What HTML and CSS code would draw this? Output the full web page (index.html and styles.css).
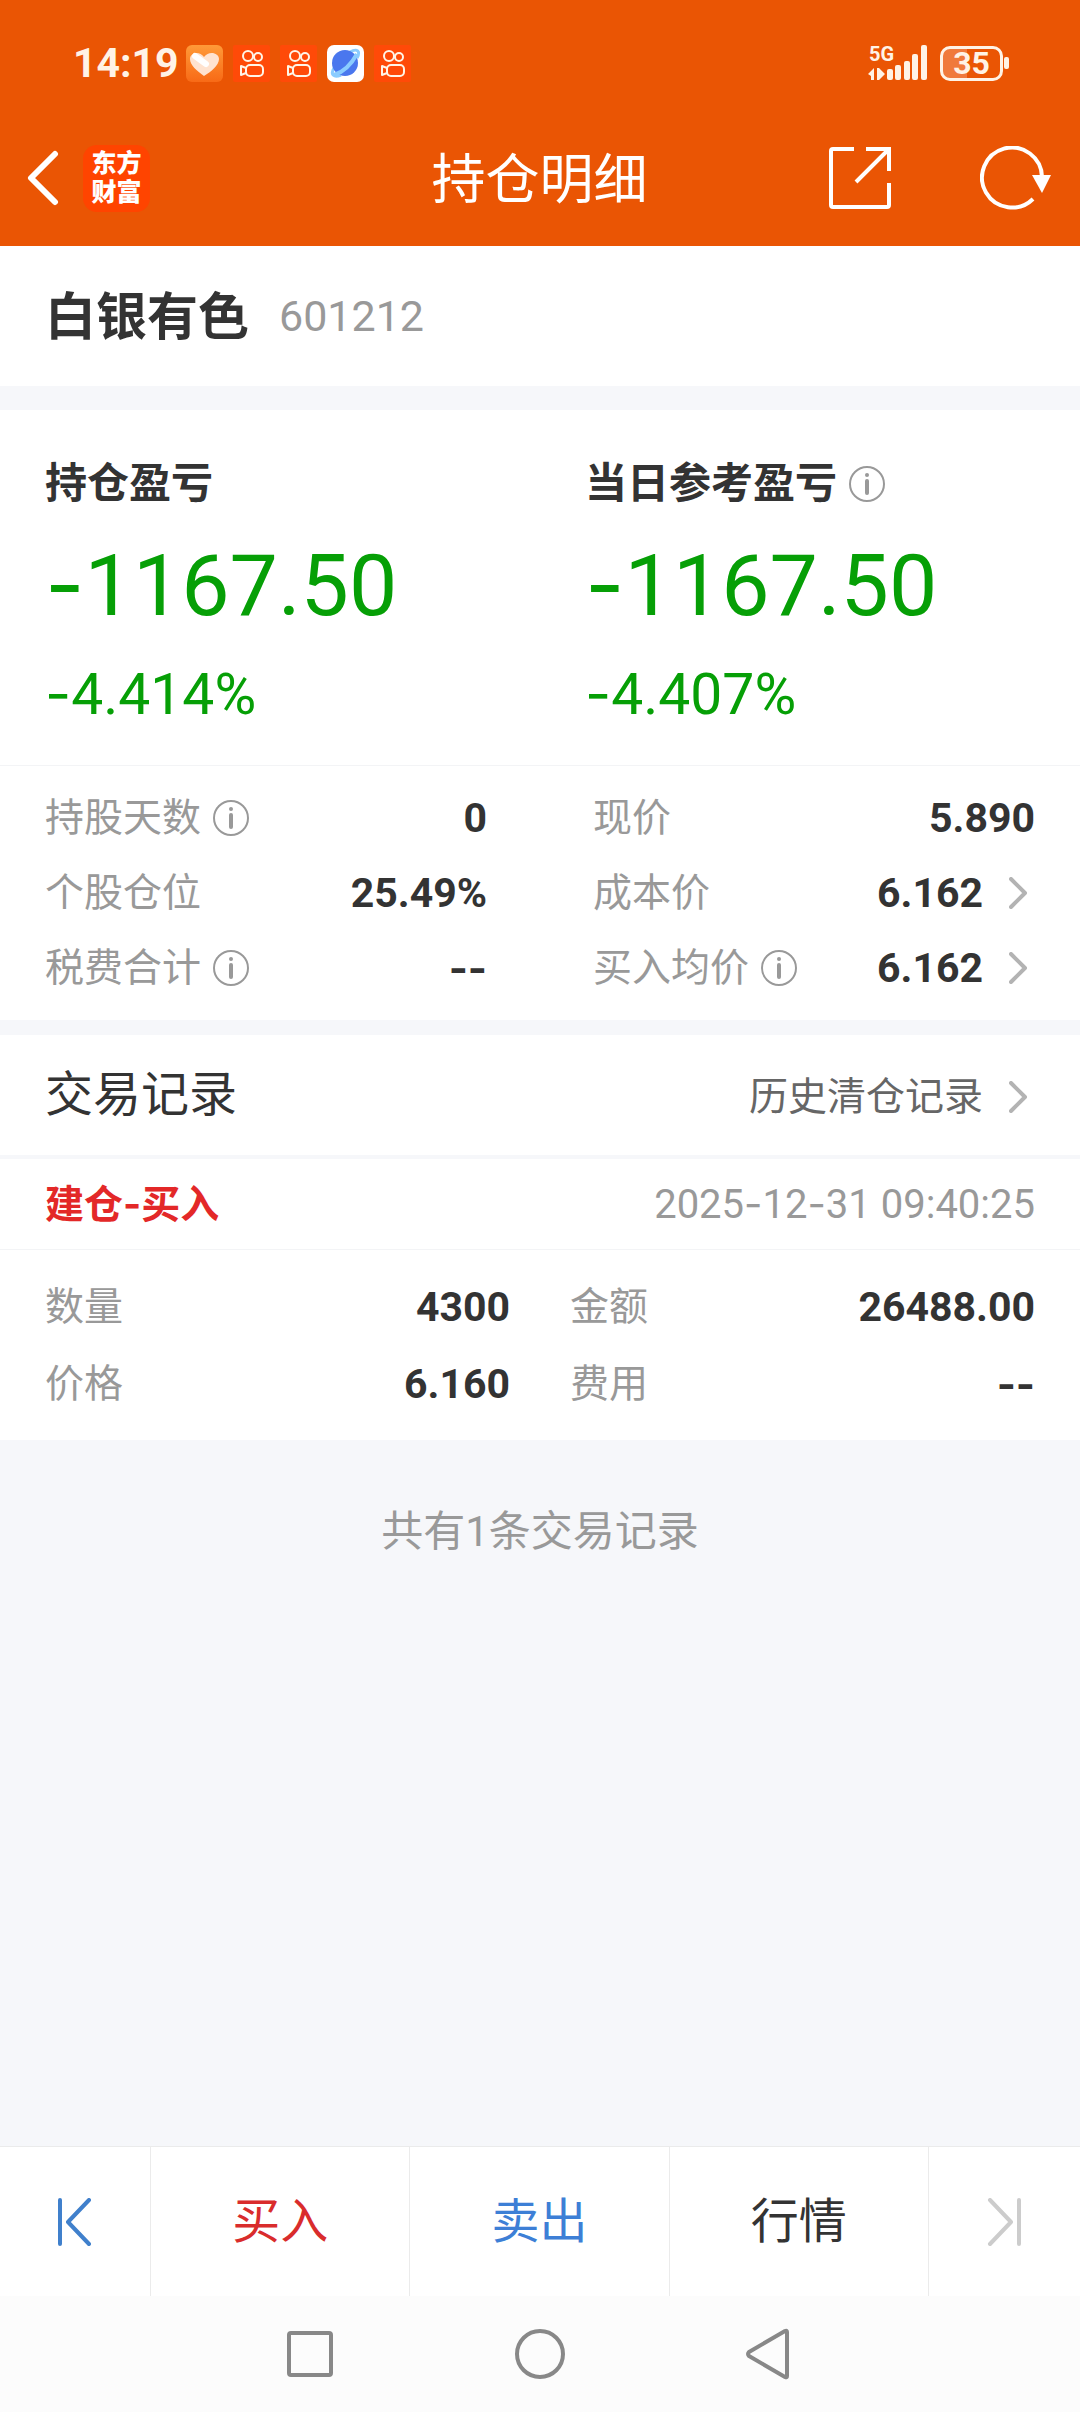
FILE: index.html
```html
<!DOCTYPE html>
<html lang="zh-CN">

<head>
    <meta charset="utf-8">
    <meta name="viewport" content="width=device-width, initial-scale=1">
    <title>持仓明细</title>
    <link rel="stylesheet" href="styles.css">
</head>

<body>
    <!-- shared icons -->
    <svg class="sprite" aria-hidden="true">
        <symbol id="info" viewBox="0 0 36 36">
            <circle cx="18" cy="18" r="17" fill="none" stroke="#999" stroke-width="2"/>
            <circle cx="18" cy="9" r="2" fill="#999"/>
            <path d="M18 15v12" stroke="#999" stroke-width="4" stroke-linecap="round"/>
        </symbol>
        <symbol id="chevron" viewBox="0 0 19 32">
            <path d="M2 2l14 14L2 30" fill="none" stroke="#b3b3b3" stroke-width="4" stroke-linecap="round" stroke-linejoin="round"/>
        </symbol>
        <symbol id="kwai" viewBox="0 0 37 37">
            <rect width="37" height="37" rx="2" fill="#ff4a08"/>
            <g fill="none" stroke="#fff5e8" stroke-width="2" stroke-linejoin="round">
                <circle cx="15" cy="11" r="5"/>
                <circle cx="25" cy="12" r="4"/>
                <rect x="13" y="20" width="17" height="11" rx="4"/>
                <path d="M13 23l-5-2v9l5-2"/>
            </g>
        </symbol>
    </svg>

    <header class="header">
        <div class="status">
            <span class="time">14:19</span>
            <div class="notices">
                <svg width="37" height="37" viewBox="0 0 37 37">
                    <defs>
                        <linearGradient id="orange" x2="0" y2="1"><stop stop-color="#ff9a38"/><stop offset="1" stop-color="#f86a16"/></linearGradient>
                    </defs>
                    <rect width="37" height="37" rx="6" fill="url(#orange)"/>
                    <path d="M18 31C11 26 4 20 4 14c0-6 9-9 14-2 5-7 15-4 15 2 0 6-8 13-15 17z" fill="#ffe3cf"/>
                    <path d="M9 11l11 8" stroke="#fff" stroke-width="6" stroke-linecap="round"/>
                </svg>
                <svg width="37" height="37"><use href="#kwai"/></svg>
                <svg width="37" height="37"><use href="#kwai"/></svg>
                <svg width="37" height="37" viewBox="0 0 37 37">
                    <rect width="37" height="37" rx="7" fill="#fff"/>
                    <path d="M23 7c7-4 11-1 7 6M7 23c-4 7 0 10 7 7" fill="none" stroke="#8accff" stroke-width="3"/>
                    <circle cx="18" cy="18" r="13" fill="#4a77ee"/>
                    <path d="M30 9C25 18 17 27 7 30" fill="none" stroke="#8accff" stroke-width="4"/>
                </svg>
                <svg width="37" height="37"><use href="#kwai"/></svg>
            </div>
            <div class="signal">
                <span class="network">5G</span>
                <svg width="60" height="36" viewBox="0 0 60 36" fill="#fff3e6">
                    <path d="M0 29l6-6v12H3v-4zM17 29l-6 6h-2V23h2z"/>
                    <rect x="19" y="24" width="6" height="11" rx="2"/>
                    <rect x="27" y="20" width="6" height="15" rx="2"/>
                    <rect x="36" y="16" width="6" height="19" rx="2"/>
                    <rect x="44" y="9" width="6" height="26" rx="2"/>
                    <rect x="53" y="0" width="6" height="35" rx="2"/>
                </svg>
            </div>
            <div class="battery">35</div>
        </div>

        <div class="titlebar">
            <div class="title-left">
                <button class="icon-button" aria-label="返回">
                    <svg width="32" height="56" viewBox="0 0 32 56"><path d="M28 4L4 28l24 24" fill="none" stroke="#fff" stroke-width="6" stroke-linecap="round" stroke-linejoin="round"/></svg>
                </button>
                <div class="logo">东方<br>财富</div>
            </div>
            <h1 class="title">持仓明细</h1>
            <div class="title-right">
                <button class="icon-button" aria-label="分享">
                    <svg width="64" height="64" viewBox="0 0 64 64" fill="none" stroke="#fff" stroke-width="4">
                        <path d="M26 3H5q-2 0-2 2v54q0 2 2 2h54q2 0 2-2V37M38 3h23v22M61 3L28 36"/>
                    </svg>
                </button>
                <button class="icon-button" aria-label="刷新">
                    <svg width="72" height="64" viewBox="0 0 72 64">
                        <path d="M53 53A30 30 0 1 1 62 31" fill="none" stroke="#fff" stroke-width="4"/>
                        <path d="M52 29h19l-9 18z" fill="#fff"/>
                    </svg>
                </button>
            </div>
        </div>
    </header>

    <main>
        <section class="stock">
            <h2 class="stock-name">白银有色</h2>
            <span class="stock-code">601212</span>
        </section>

        <!-- profit and loss -->
        <section class="profit">
            <div>
                <h3 class="profit-label">持仓盈亏</h3>
                <div class="profit-amount"><span class="dash">-</span>1167.50</div>
                <div class="profit-rate"><span class="dash">-</span>4.414%</div>
            </div>
            <div>
                <h3 class="profit-label">当日参考盈亏<svg class="info"><use href="#info"/></svg></h3>
                <div class="profit-amount"><span class="dash">-</span>1167.50</div>
                <div class="profit-rate"><span class="dash">-</span>4.407%</div>
            </div>
        </section>

        <dl class="stats">
            <div class="item"><dt>持股天数<svg class="info"><use href="#info"/></svg></dt><dd>0</dd></div>
            <div class="item"><dt>现价</dt><dd>5.890</dd></div>
            <div class="item"><dt>个股仓位</dt><dd>25.49%</dd></div>
            <div class="item"><dt>成本价</dt><dd>6.162<svg class="chevron"><use href="#chevron"/></svg></dd></div>
            <div class="item"><dt>税费合计<svg class="info"><use href="#info"/></svg></dt><dd><span class="dash">--</span></dd></div>
            <div class="item"><dt>买入均价<svg class="info"><use href="#info"/></svg></dt><dd>6.162<svg class="chevron"><use href="#chevron"/></svg></dd></div>
        </dl>

        <!-- trade records -->
        <section class="records-head">
            <h2 class="records-title">交易记录</h2>
            <a class="history" href="#">历史清仓记录<svg class="chevron"><use href="#chevron"/></svg></a>
        </section>

        <article class="record">
            <div class="record-head">
                <h3 class="record-type">建仓<span class="dash">-</span>买入</h3>
                <time class="record-time">2025<span class="dash">-</span>12<span class="dash">-</span>31 09:40:25</time>
            </div>
            <dl class="record-body">
                <div class="item"><dt>数量</dt><dd>4300</dd></div>
                <div class="item"><dt>金额</dt><dd>26488.00</dd></div>
                <div class="item"><dt>价格</dt><dd>6.160</dd></div>
                <div class="item"><dt>费用</dt><dd><span class="dash">--</span></dd></div>
            </dl>
        </article>

        <p class="total">共有1条交易记录</p>
    </main>

    <footer>
        <div class="actions">
            <button class="action-side" aria-label="上一只">
                <svg width="34" height="48" viewBox="0 0 34 48" fill="none" stroke="#4080cc" stroke-width="4" stroke-linecap="round" stroke-linejoin="round"><path d="M2 2v44M31 2L10 24l21 22"/></svg>
            </button>
            <button class="action buy">买入</button>
            <button class="action sell">卖出</button>
            <button class="action">行情</button>
            <button class="action-side" aria-label="下一只">
                <svg width="34" height="48" viewBox="0 0 34 48" fill="none" stroke="#ccc" stroke-width="4" stroke-linecap="round" stroke-linejoin="round"><path d="M32 2v44M3 2l21 22L3 46"/></svg>
            </button>
        </div>
        <div class="system">
            <button aria-label="最近任务"><svg width="52" height="52" viewBox="0 0 52 52" fill="none" stroke="#888" stroke-width="4"><rect x="5" y="5" width="42" height="42" rx="2"/></svg></button>
            <button aria-label="主屏幕"><svg width="52" height="52" viewBox="0 0 52 52" fill="none" stroke="#888" stroke-width="4"><circle cx="26" cy="26" r="23"/></svg></button>
            <button aria-label="后退"><svg width="52" height="52" viewBox="0 0 52 52" fill="none" stroke="#888" stroke-width="4" stroke-linejoin="round"><path d="M43 4v44q0 2-2 1L5 28q-2-2 0-4L41 3q2-1 2 1z"/></svg></button>
        </div>
    </footer>
</body>

</html>
```
FILE: styles.css
```css
* {
    box-sizing: border-box;
}

body {
    display: flex;
    flex-direction: column;
    min-height: 100vh;
    margin: 0;
    background-color: #f6f7fa;
    color: #333;
    font-family: Roboto, "Noto Sans CJK SC", sans-serif;
    font-size: 39px;
    line-height: 60px;
}

h1,
h2,
h3,
p,
dl,
dd {
    margin: 0;
}

button {
    padding: 0;
    border: none;
    background: none;
    color: inherit;
    font: inherit;
    cursor: pointer;
}

svg {
    display: block;
    flex: none;
}

.sprite {
    position: absolute;
    width: 0;
    height: 0;
}

/* the hyphen of Inter is as wide as a minus sign */
.dash {
    font-family: Inter, sans-serif;
}

.info {
    width: 36px;
    height: 36px;
    margin-left: 12px;
}

.chevron {
    width: 19px;
    height: 32px;
    margin: 0 7px 0 26px;
}

/* Header */
.header {
    background-color: #ea5504;
    color: #fff;
}

.status {
    display: flex;
    align-items: center;
    height: 110px;
    padding: 16px 77px 0 73px;
    color: #fff3e6;
}

.time {
    font-size: 41px;
    font-weight: 700;
}

.notices {
    display: flex;
    gap: 10px;
    margin-left: 7px;
    margin-right: auto;
}

.signal {
    position: relative;
}

.network {
    position: absolute;
    top: -1px;
    left: 1px;
    font-size: 20px;
    font-weight: 700;
    line-height: 20px;
}

.battery {
    position: relative;
    width: 63px;
    height: 35px;
    margin-left: 12px;
    border: 3px solid #fff3e6;
    border-radius: 10px;
    background: linear-gradient(to right, #f07a3c 24px, transparent 24px);
    font-size: 32px;
    font-weight: 700;
    line-height: 29px;
    text-align: center;
}

.battery::after {
    content: "";
    position: absolute;
    top: 8px;
    right: -9px;
    width: 5px;
    height: 12px;
    border-radius: 2px;
    background-color: #fff3e6;
}

.titlebar {
    display: grid;
    grid-template-columns: 1fr auto 1fr;
    align-items: center;
    height: 136px;
    padding: 0 28px 0 27px;
}

.title {
    padding-top: 6px;
    font-size: 54px;
    font-weight: 400;
}

.title-left,
.title-right {
    display: flex;
    align-items: center;
}

.title-left {
    gap: 24px;
}

.title-right {
    justify-content: flex-end;
    gap: 88px;
}

.logo {
    width: 67px;
    height: 67px;
    padding-top: 4px;
    border-radius: 14px;
    background-color: #ff4400;
    font-size: 25px;
    font-weight: 900;
    line-height: 29px;
    text-align: center;
}

/* Stock name */
.stock {
    display: flex;
    align-items: center;
    gap: 30px;
    height: 140px;
    padding: 0 45px;
    background-color: #fff;
}

.stock-name {
    padding-top: 4px;
    font-size: 51px;
    font-weight: 700;
}

.stock-code {
    color: #999;
    font-size: 43px;
}

/* Profit and loss */
.profit {
    display: grid;
    grid-template-columns: 1fr 1fr;
    gap: 90px;
    margin-top: 24px;
    padding: 44px 45px 32px;
    border-bottom: 1px solid #f3f4f6;
    background-color: #fff;
}

.profit-label {
    display: flex;
    align-items: center;
    font-size: 42px;
    font-weight: 700;
}

.profit-amount,
.profit-rate {
    color: #069f06;
}

.profit-amount {
    font-size: 86px;
    line-height: 140px;
}

.profit-rate {
    font-size: 57px;
    line-height: 76px;
}

/* Label and value pairs */
.stats,
.record-body {
    display: grid;
    grid-template-columns: 1fr 1fr;
    background-color: #fff;
}

.stats {
    gap: 15px 106px;
    padding: 22px 45px;
}

.item {
    display: flex;
    justify-content: space-between;
}

.item dt,
.item dd {
    display: flex;
    align-items: center;
}

.item dt {
    color: #999;
}

.item dd {
    font-size: 41px;
    font-weight: 700;
}

/* Trade records */
.records-head {
    display: flex;
    justify-content: space-between;
    align-items: center;
    height: 120px;
    margin-top: 15px;
    padding: 0 45px;
    background-color: #fff;
}

.records-title {
    font-size: 48px;
    font-weight: 400;
}

.history {
    display: flex;
    align-items: center;
    padding-top: 4px;
    color: #666;
    text-decoration: none;
}

.record {
    margin-top: 4px;
    background-color: #fff;
}

.record-head {
    display: flex;
    justify-content: space-between;
    align-items: center;
    height: 91px;
    padding: 0 45px;
    border-bottom: 1px solid #f3f4f6;
}

.record-type {
    color: #e32828;
    font-size: 39px;
    font-weight: 700;
}

.record-time {
    color: #999;
    font-size: 40px;
}

.record-body {
    gap: 17px 60px;
    padding: 27px 45px 26px;
}

.total {
    padding: 62px 45px;
    color: #999;
    font-size: 42px;
    text-align: center;
}

/* Bottom bar */
footer {
    margin-top: auto;
}

.actions {
    display: flex;
    height: 150px;
    border-top: 1px solid #ebebeb;
    background-color: #fff;
}

.actions button {
    display: flex;
    justify-content: center;
    align-items: center;
    border-right: 1px solid #ebebeb;
}

.actions button:last-child {
    border-right: none;
}

.action {
    flex: 1;
    font-size: 48px;
}

.action-side {
    width: 14%;
}

.buy {
    color: #d92c2c;
}

.sell {
    color: #3d7fd6;
}

.system {
    display: grid;
    grid-template-columns: repeat(3, 1fr);
    align-items: center;
    justify-items: center;
    height: 116px;
    padding: 0 18%;
    background-color: #fcfcfc;
}
```
